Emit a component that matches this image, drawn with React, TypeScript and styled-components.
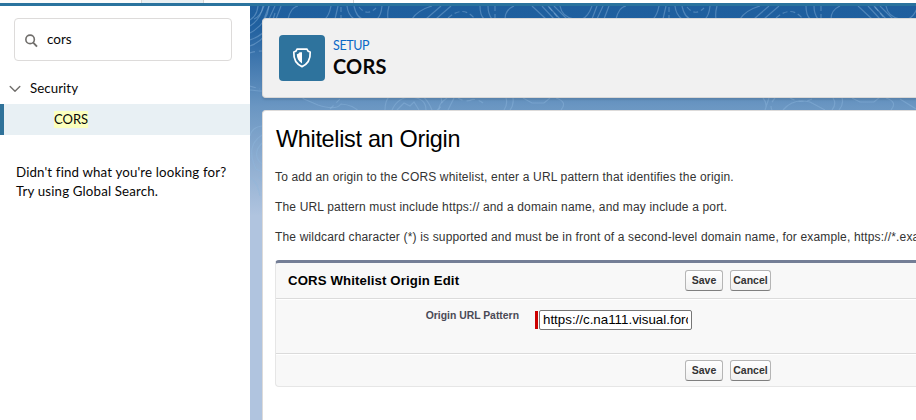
import React from "react";
import styled, { createGlobalStyle } from "styled-components";

const GlobalStyle = createGlobalStyle`
  *, *::before, *::after { box-sizing: border-box; }
  body { margin: 0; overflow: hidden; background: #fff; }
  h1, h2, h3, p { margin: 0; }
`;

const Page = styled.div`
  width: 916px;
  height: 420px;
  overflow: hidden;
  display: flex;
  flex-direction: column;
  font-family: Lato, "Open Sans", sans-serif;
  color: #080707;
`;

const NavBar = styled.nav`
  flex: none;
  height: 6px;
  display: flex;
  background: #fff;
  border-bottom: 3px solid #2a739e;
`;

const NavSegment = styled.div<{ $width: number; $active?: boolean }>`
  width: ${(p) => p.$width}px;
  border-right: 1px solid #d4d4d4;
  background: ${(p) => (p.$active ? "#e9eff2" : "#fbfbfb")};
`;

const Columns = styled.div`
  flex: 1;
  display: flex;
  min-height: 0;
`;

const Sidebar = styled.aside`
  flex: none;
  width: 250px;
  background: #fff;
  padding-top: 12px;
  font-size: 13px;
`;

const SearchBox = styled.label`
  display: flex;
  align-items: center;
  width: 218px;
  height: 43px;
  margin-left: 14px;
  padding-left: 10px;
  border: 1px solid #dddbda;
  border-radius: 4px;
  svg { position: relative; top: 1px; }
`;

const SearchInput = styled.input`
  width: 160px;
  margin-left: 9px;
  padding: 0 0 2px;
  border: 0;
  outline: 0;
  background: transparent;
  font: 13.5px Lato, sans-serif;
  color: #080707;
`;

const TreeHeading = styled.div`
  display: flex;
  align-items: center;
  height: 21px;
  margin-top: 16px;
  padding-left: 9px;
  gap: 9px;
  font-size: 13.3px;
  letter-spacing: 0.06px;
  svg { position: relative; top: 1px; }
`;

const TreeLeaf = styled.div`
  display: flex;
  align-items: center;
  height: 31px;
  margin-top: 6px;
  padding-left: 50px;
  border-left: 4px solid #2f7299;
  background: #e8f0f4;
`;

const Match = styled.mark`
  height: 17px;
  line-height: 17px;
  background: #fbffbe;
  color: #080707;
  font-size: 13px;
`;

const Hint = styled.p`
  padding: 28px 0 0 16px;
  font-size: 13.3px;
  line-height: 19px;
  letter-spacing: 0.15px;
  white-space: nowrap;
`;

const Main = styled.main`
  position: relative;
  flex: 1;
  min-width: 0;
  display: flex;
  flex-direction: column;
  padding: 12px 0 0 12px;
  background: linear-gradient(#1f5f9e 0, #20609f 20px, #6a96c2 100px, #b0c4df 210px);
`;

const Contours = styled.svg`
  position: absolute;
  inset: 0;
  width: 666px;
  height: 414px;
`;

const PageHeader = styled.header`
  position: relative;
  flex: none;
  display: flex;
  height: 80px;
  padding: 16px 0 0 16px;
  border: 1px solid #d9d8d7;
  border-right: 0;
  border-radius: 4px 0 0 4px;
  background: #f1f1f1;
  box-shadow: 0 2px 2px rgba(0, 0, 0, 0.1);
`;

const HeaderIcon = styled.div`
  display: flex;
  align-items: center;
  justify-content: center;
  width: 46px;
  height: 46px;
  border-radius: 4px;
  background: #2e739d;
`;

const HeaderText = styled.div`
  margin-left: 8px;
`;

const Eyebrow = styled.p`
  height: 18px;
  font-size: 12.5px;
  line-height: 21px;
  letter-spacing: -0.4px;
  color: #0a68c6;
`;

const Title = styled.h1`
  font-size: 20px;
  line-height: 26px;
  font-weight: 700;
  letter-spacing: 0.2px;
`;

const Content = styled.section`
  position: relative;
  flex: 1;
  margin-top: 12px;
  padding: 16px 0 0 12px;
  border: 1px solid #dddbda;
  border-right: 0;
  border-bottom: 0;
  border-radius: 4px 0 0 0;
  background: #fff;
  font-family: "Liberation Sans", Arial, sans-serif;
`;

const ContentTitle = styled.h2`
  height: 42px;
  padding-left: 1px;
  font-size: 23.4px;
  line-height: 25px;
  font-weight: 400;
  letter-spacing: -0.3px;
  color: #000;
`;

const Paragraph = styled.p`
  height: 30px;
  font-size: 12px;
  line-height: 16px;
  letter-spacing: 0.165px;
  white-space: nowrap;
  color: #333;
`;

const EditBlock = styled.form`
  height: 127px;
  margin-top: 1px;
  border: 1px solid #e6e6e6;
  border-top: 3px solid #747e96;
  border-right: 0;
  border-radius: 4px 0 0 4px;
  background: #f8f8f8;
`;

const ButtonBar = styled.div<{ $footer?: boolean }>`
  display: flex;
  align-items: center;
  height: ${(p) => (p.$footer ? 33 : 35)}px;
`;

const BlockTitle = styled.h3`
  width: 409px;
  padding-left: 12px;
  font-size: 13.2px;
  line-height: 16px;
  font-weight: 700;
  letter-spacing: 0.13px;
  color: #000;
`;

const Spacer = styled.div`
  width: 409px;
`;

const ActionButton = styled.button<{ $width: number }>`
  width: ${(p) => p.$width}px;
  height: 21px;
  margin-right: 7px;
  padding: 0;
  border: 1px solid #b5b5b5;
  border-bottom-color: #7f7f7f;
  border-radius: 3px;
  background: linear-gradient(#fff, #f0f0f0);
  font: 700 10.5px/17px "Liberation Sans", Arial, sans-serif;
  color: #333;
`;

const FieldRow = styled.div`
  display: flex;
  height: 56px;
  padding-top: 10px;
  border-top: 1px solid #dbdbdb;
  border-bottom: 1px solid #dbdbdb;
  box-shadow: inset 0 1px #fff, 0 1px #fff;
`;

const FieldLabel = styled.label`
  width: 243px;
  text-align: right;
  font-size: 10.4px;
  line-height: 13px;
  font-weight: 700;
  color: #4a4a56;
`;

const Required = styled.span`
  width: 3px;
  height: 18px;
  margin: 2px 1px 0 16px;
  background: #c00;
`;

const UrlInput = styled.input`
  width: 153px;
  height: 20px;
  margin-top: 1px;
  padding: 0 3px 1px;
  border: 1px solid #767676;
  border-radius: 2px;
  outline: 0;
  background: #fff;
  font: 13.33px "Liberation Sans", Arial, sans-serif;
  color: #000;
`;

const SearchIcon = () => (
  <svg width="13" height="14" viewBox="0 0 13 14" fill="none" stroke="#706e6b">
    <circle cx="5.1" cy="5.4" r="4.25" strokeWidth="1.6" />
    <path d="M8.2 8.7 12 12.7" strokeWidth="1.9" />
  </svg>
);

const Chevron = () => (
  <svg width="12" height="8" viewBox="0 0 12 8" fill="none" stroke="#706e6b" strokeWidth="1.4" strokeLinecap="round" strokeLinejoin="round">
    <path d="M1.2 1.5 6 6.2l4.8-4.7" />
  </svg>
);

const Shield = () => (
  <svg width="22" height="22" viewBox="0 0 22 22">
    <path
      d="M6 2.2h10c.4 1.5 1.6 2.5 3.2 2.8.3 6.3-2.2 12-8.2 14.6C5 17 2.5 11.300 2.800 5 4.400 4.700 5.600 3.700 6 2.200Z"
      fill="none"
      stroke="#fff"
      strokeWidth="1.7"
      strokeLinejoin="round"
    />
    <path d="M11 5.200v11.200C7.300 14.300 5.900 11.200 5.800 7.300 7.200 7 8 6.300 8.500 5.200Z" fill="#fff" />
  </svg>
);

/* Strokes of one repeat of the contour strip above the page header. */
const StripLines = () => (
  <g>
    <path d="M0 0q0 9 4 13M8 0q0 8 4 13M34 0q-9 4-9 13" />
    <path d="M52 0l14 13M62 0l12 13M68 0l12 13M74 0l13 13M80 0q2 11 14 13M112 0q-4 11-10 13M117 0l-5 13M123 0l-6 13M129 0l-5 13M146 0q-7 1-10 13" />
    <path d="M179 0q-2 10-6 13M186 0l-3 13M195 0q1 9 7 13M202 0q3 14 12 13M230 0q-1 10-5 13M237 0q-2 7-1 13M280 0q-14 4-20 13M289 0l-15 13M299 0l-15 13" />
    <path strokeDasharray="5 3" d="M15 0v13M69 1l10 12M189 1v12M207 1q8 10 17 1M296 12q15-13 26 0" />
  </g>
);

const ContourPattern = () => (
  <Contours viewBox="0 0 666 414" fill="none" stroke="#8fb7dd" strokeOpacity="0.42" strokeWidth="1.2" aria-hidden="true">
    <g transform="translate(-98 0)"><StripLines /></g>
    <g transform="translate(230 0)"><StripLines /></g>
    <g transform="translate(556 0)"><StripLines /></g>
    <path d="M0 14q7-4 8-14M0 20q11-7 13-20M0 27q17-9 19-27M0 34q20-7 25-27M0 40q15-5 23-24" />
    <path strokeDasharray="5 4" d="M0 47q6-2 12-2" />
    <path d="M0 84q14 2 30 0 14-1 24 9l14 6q18 6 23-1 13 1 18 8" />
    <path d="M135 104q0-10 5-14M142 104q6-13 19-13 15 1 15 13M147 104l7-7 6 3 4-4 5 8M182 104q-4-10-10-14M197 92q-9 6-8 12M204 92l-6 12M256 92q2 6-2 12M263 92q1 7-3 12M273 92l9 5h12l6-5M306 92q12 4 5 12" />
    <path strokeDasharray="5 4" d="M80 103l12-12M191 92q3 8-4 12M208 92q8 5 16 1M220 94q6-2 13 3" />
    <path d="M513 92q5 6 2 12M519 92l-4 12M533 104q10-12 27-8l15 8M583 92q4 6-1 12M592 92q2 6-3 12M602 92l8 4h14l6-5M636 92q12 4 5 12M650 93l16 10" />
    <path strokeDasharray="5 4" d="M525 92q-6 7-3 12M540 92q11 6 22 1" />
    <path d="M12 120Q2 121 0 130M12 129Q-5 140 6 163l6 3M12 137Q1 149 12 158M0 172q7 2 10 18M9 171l3 4" />
    <path strokeDasharray="6 4" d="M0 80l10 3" />
  </Contours>
);

const Actions = () => (
  <>
    <ActionButton type="button" $width={38}>Save</ActionButton>
    <ActionButton type="button" $width={41}>Cancel</ActionButton>
  </>
);

export default function App() {
  return (
    <Page>
      <GlobalStyle />
      <NavBar>
        <NavSegment $width={142} />
        <NavSegment $width={62} $active />
        <NavSegment $width={150} />
      </NavBar>
      <Columns>
        <Sidebar>
          <SearchBox>
            <SearchIcon />
            <SearchInput defaultValue="cors" aria-label="Quick Find" />
          </SearchBox>
          <TreeHeading>
            <Chevron />
            Security
          </TreeHeading>
          <TreeLeaf>
            <Match>CORS</Match>
          </TreeLeaf>
          <Hint>
            Didn't find what you're looking for?
            <br />
            Try using Global Search.
          </Hint>
        </Sidebar>
        <Main>
          <ContourPattern />
          <PageHeader>
            <HeaderIcon>
              <Shield />
            </HeaderIcon>
            <HeaderText>
              <Eyebrow>SETUP</Eyebrow>
              <Title>CORS</Title>
            </HeaderText>
          </PageHeader>
          <Content>
            <ContentTitle>Whitelist an Origin</ContentTitle>
            <Paragraph>To add an origin to the CORS whitelist, enter a URL pattern that identifies the origin.</Paragraph>
            <Paragraph>The URL pattern must include https:// and a domain name, and may include a port.</Paragraph>
            <Paragraph>
              The wildcard character (*) is supported and must be in front of a second-level domain name, for example, https://*.example.com.
            </Paragraph>
            <EditBlock>
              <ButtonBar>
                <BlockTitle>CORS Whitelist Origin Edit</BlockTitle>
                <Actions />
              </ButtonBar>
              <FieldRow>
                <FieldLabel htmlFor="origin">Origin URL Pattern</FieldLabel>
                <Required />
                <UrlInput id="origin" defaultValue="https://c.na111.visual.force.com" />
              </FieldRow>
              <ButtonBar $footer>
                <Spacer />
                <Actions />
              </ButtonBar>
            </EditBlock>
          </Content>
        </Main>
      </Columns>
    </Page>
  );
}
